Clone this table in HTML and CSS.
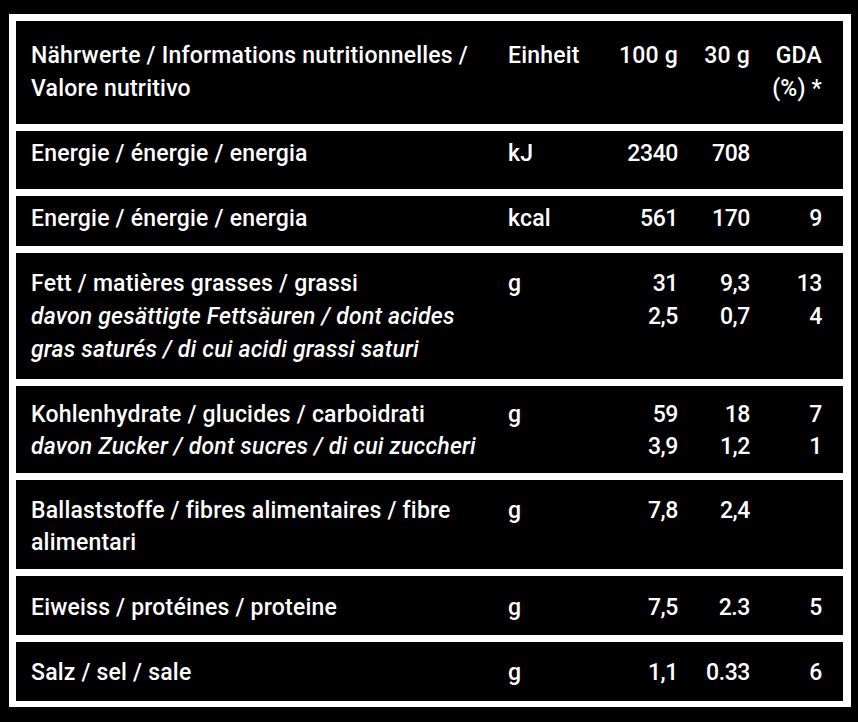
FILE: index.html
```html
<!DOCTYPE html>
<html lang="de">
<head>
<meta charset="utf-8">
<title>Nährwerte</title>
<link rel="stylesheet" href="styles.css">
</head>
<body>
<div class="frame">
  <div class="row row-head">
    <div class="name">Nährwerte / Informations nutritionnelles /<br>Valore nutritivo</div>
    <div class="unit">Einheit</div>
    <div class="num">100 g</div>
    <div class="num">30 g</div>
    <div class="num">GDA<br>(%) *</div>
  </div>
  <div class="row row-kj">
    <div class="name">Energie / énergie / energia</div>
    <div class="unit">kJ</div>
    <div class="num">2340</div>
    <div class="num">708</div>
    <div class="num"></div>
  </div>
  <div class="row row-kcal">
    <div class="name">Energie / énergie / energia</div>
    <div class="unit">kcal</div>
    <div class="num">561</div>
    <div class="num">170</div>
    <div class="num">9</div>
  </div>
  <div class="row row-fat">
    <div class="name">Fett / matières grasses / grassi<br><em>davon gesättigte Fettsäuren / dont acides<br>gras saturés / di cui acidi grassi saturi</em></div>
    <div class="unit">g</div>
    <div class="num">31<br>2,5</div>
    <div class="num">9,3<br>0,7</div>
    <div class="num">13<br>4</div>
  </div>
  <div class="row row-carb">
    <div class="name">Kohlenhydrate / glucides / carboidrati<br><em>davon Zucker / dont sucres / di cui zuccheri</em></div>
    <div class="unit">g</div>
    <div class="num">59<br>3,9</div>
    <div class="num">18<br>1,2</div>
    <div class="num">7<br>1</div>
  </div>
  <div class="row row-fibre">
    <div class="name">Ballaststoffe / fibres alimentaires / fibre<br>alimentari</div>
    <div class="unit">g</div>
    <div class="num">7,8</div>
    <div class="num">2,4</div>
    <div class="num"></div>
  </div>
  <div class="row row-prot">
    <div class="name">Eiweiss / protéines / proteine</div>
    <div class="unit">g</div>
    <div class="num">7,5</div>
    <div class="num">2.3</div>
    <div class="num">5</div>
  </div>
  <div class="row row-salt">
    <div class="name">Salz / sel / sale</div>
    <div class="unit">g</div>
    <div class="num">1,1</div>
    <div class="num">0.33</div>
    <div class="num">6</div>
  </div>
</div>
</body>
</html>
```
FILE: styles.css
```css
html, body {
  margin: 0;
  padding: 0;
  background: #000;
}

body {
  padding: 14px 0 0 9px;
  font-family: Roboto, "Liberation Sans", sans-serif;
  font-weight: 500;
  font-size: 23px;
  color: #fff;
}

.frame {
  box-sizing: border-box;
  width: 842px;
  background: #fff;
  padding: 7px 8px 6px 7px;
  display: flex;
  flex-direction: column;
  gap: 7px;
}

.row {
  box-sizing: border-box;
  background: #000;
  display: grid;
  grid-template-columns: 477px 110px 60px 72px 72px;
  padding: 0 21px 0 15px;
  line-height: 33px;
}

.name {
  letter-spacing: 0.2px;
}

.name em {
  font-style: italic;
}

.unit {
  text-align: left;
  letter-spacing: 0.2px;
}

.num {
  text-align: right;
  white-space: nowrap;
  letter-spacing: -0.4px;
}

.row-head  { height: 103px; padding-top: 18px; }
.row-head .num { letter-spacing: 0.2px; }
.row-kj    { height: 58px;  padding-top: 6px; }
.row-kcal  { height: 50px;  padding-top: 6px; }
.row-fat   { height: 126px; padding-top: 14px; }
.row-carb  { height: 87px;  padding-top: 13px; line-height: 32px; }
.row-fibre { height: 89px;  padding-top: 15px; line-height: 32px; }
.row-prot  { height: 59px;  padding-top: 15px; }
.row-salt  { height: 59px;  padding-top: 14px; }
```
